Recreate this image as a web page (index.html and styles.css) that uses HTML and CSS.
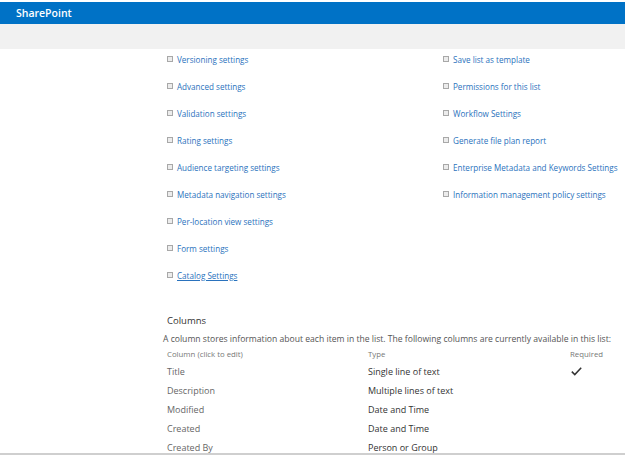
FILE: index.html
```html
<!DOCTYPE html>
<html lang="en">
<head>
    <meta charset="UTF-8">
    <title>List Settings</title>
    <link rel="stylesheet" href="styles.css">
</head>
<body>
    <div class="page">
        <div class="suite-bar">SharePoint</div>
        <div class="ribbon"></div>
        <div class="content">
            <div class="settings">
                <ul class="link-list">
                    <li><a href="#">Versioning settings</a></li>
                    <li><a href="#">Advanced settings</a></li>
                    <li><a href="#">Validation settings</a></li>
                    <li><a href="#">Rating settings</a></li>
                    <li><a href="#">Audience targeting settings</a></li>
                    <li><a href="#">Metadata navigation settings</a></li>
                    <li><a href="#">Per-location view settings</a></li>
                    <li><a href="#">Form settings</a></li>
                    <li><a href="#" class="underline">Catalog Settings</a></li>
                </ul>
                <ul class="link-list">
                    <li><a href="#">Save list as template</a></li>
                    <li><a href="#">Permissions for this list</a></li>
                    <li><a href="#">Workflow Settings</a></li>
                    <li><a href="#">Generate file plan report</a></li>
                    <li><a href="#">Enterprise Metadata and Keywords Settings</a></li>
                    <li><a href="#">Information management policy settings</a></li>
                </ul>
            </div>
            <div class="columns-section">
                <h3>Columns</h3>
                <p class="desc">A column stores information about each item in the list. The following columns are currently available in this list:</p>
                <table class="columns-table">
                    <tr class="head">
                        <td>Column (click to edit)</td>
                        <td>Type</td>
                        <td>Required</td>
                    </tr>
                    <tr>
                        <td class="name">Title</td>
                        <td>Single line of text</td>
                        <td class="req">
                            <svg width="11" height="9" viewBox="0 0 11 9"><path d="M0.8 4.6 L3.8 7.6 L10.2 0.8" fill="none" stroke="#333" stroke-width="1.5"/></svg>
                        </td>
                    </tr>
                    <tr>
                        <td class="name">Description</td>
                        <td>Multiple lines of text</td>
                        <td></td>
                    </tr>
                    <tr>
                        <td class="name">Modified</td>
                        <td>Date and Time</td>
                        <td></td>
                    </tr>
                    <tr>
                        <td class="name">Created</td>
                        <td>Date and Time</td>
                        <td></td>
                    </tr>
                    <tr>
                        <td class="name">Created By</td>
                        <td>Person or Group</td>
                        <td></td>
                    </tr>
                </table>
            </div>
        </div>
    </div>
</body>
</html>
```

FILE: styles.css
```css
* {
    box-sizing: border-box;
}
body {
    margin: 0;
    font-family: 'Open Sans', 'Liberation Sans', sans-serif;
    background: #fff;
    color: #444;
}
.page {
    height: 455px;
    overflow: hidden;
    border-bottom: 2px solid #cfcfcf;
    padding-top: 2px;
    background: #fff;
}
.suite-bar {
    height: 22px;
    background: #0072c6;
    color: #fff;
    font-size: 10.5px;
    font-weight: 600;
    line-height: 22px;
    padding-left: 16px;
}
.ribbon {
    height: 25px;
    background: #f1f1f1;
}
.content {
    padding-left: 163px;
}
.settings {
    display: grid;
    grid-template-columns: 276px 1fr;
    padding-top: 4px;
}
.link-list {
    list-style: none;
    margin: 0;
    padding: 0 0 0 4px;
}
.link-list li {
    height: 12px;
    margin-bottom: 15px;
    display: flex;
    align-items: center;
    gap: 4px;
    font-size: 8.1px;
}
.link-list li::before {
    content: "";
    flex: none;
    width: 4px;
    height: 4px;
    border: 1px solid #a8a8a8;
    background: #ececec;
}
.link-list a {
    color: #2a72bd;
    text-decoration: none;
}
.link-list a.underline {
    text-decoration: underline;
}
.columns-section {
    margin-top: 18px;
}
.columns-section h3 {
    margin: 0 0 0 4px;
    font-size: 9.5px;
    font-weight: 400;
    color: #333;
    line-height: 14px;
}
.desc {
    margin: 5px 0 0;
    font-size: 8.6px;
    color: #555;
    line-height: 12px;
}
.columns-table {
    border-collapse: collapse;
    margin-left: 4px;
    margin-top: 1px;
}
.columns-table td {
    padding: 0;
    height: 19px;
    font-size: 9px;
    color: #333;
    vertical-align: middle;
}
.columns-table td:nth-child(1) {
    width: 201px;
}
.columns-table td:nth-child(2) {
    width: 202px;
}
.columns-table td.name {
    color: #666;
}
.columns-table .head td {
    font-size: 7.8px;
    color: #777;
    height: 16px;
}
.req svg {
    display: block;
    margin-left: 1px;
}
```
